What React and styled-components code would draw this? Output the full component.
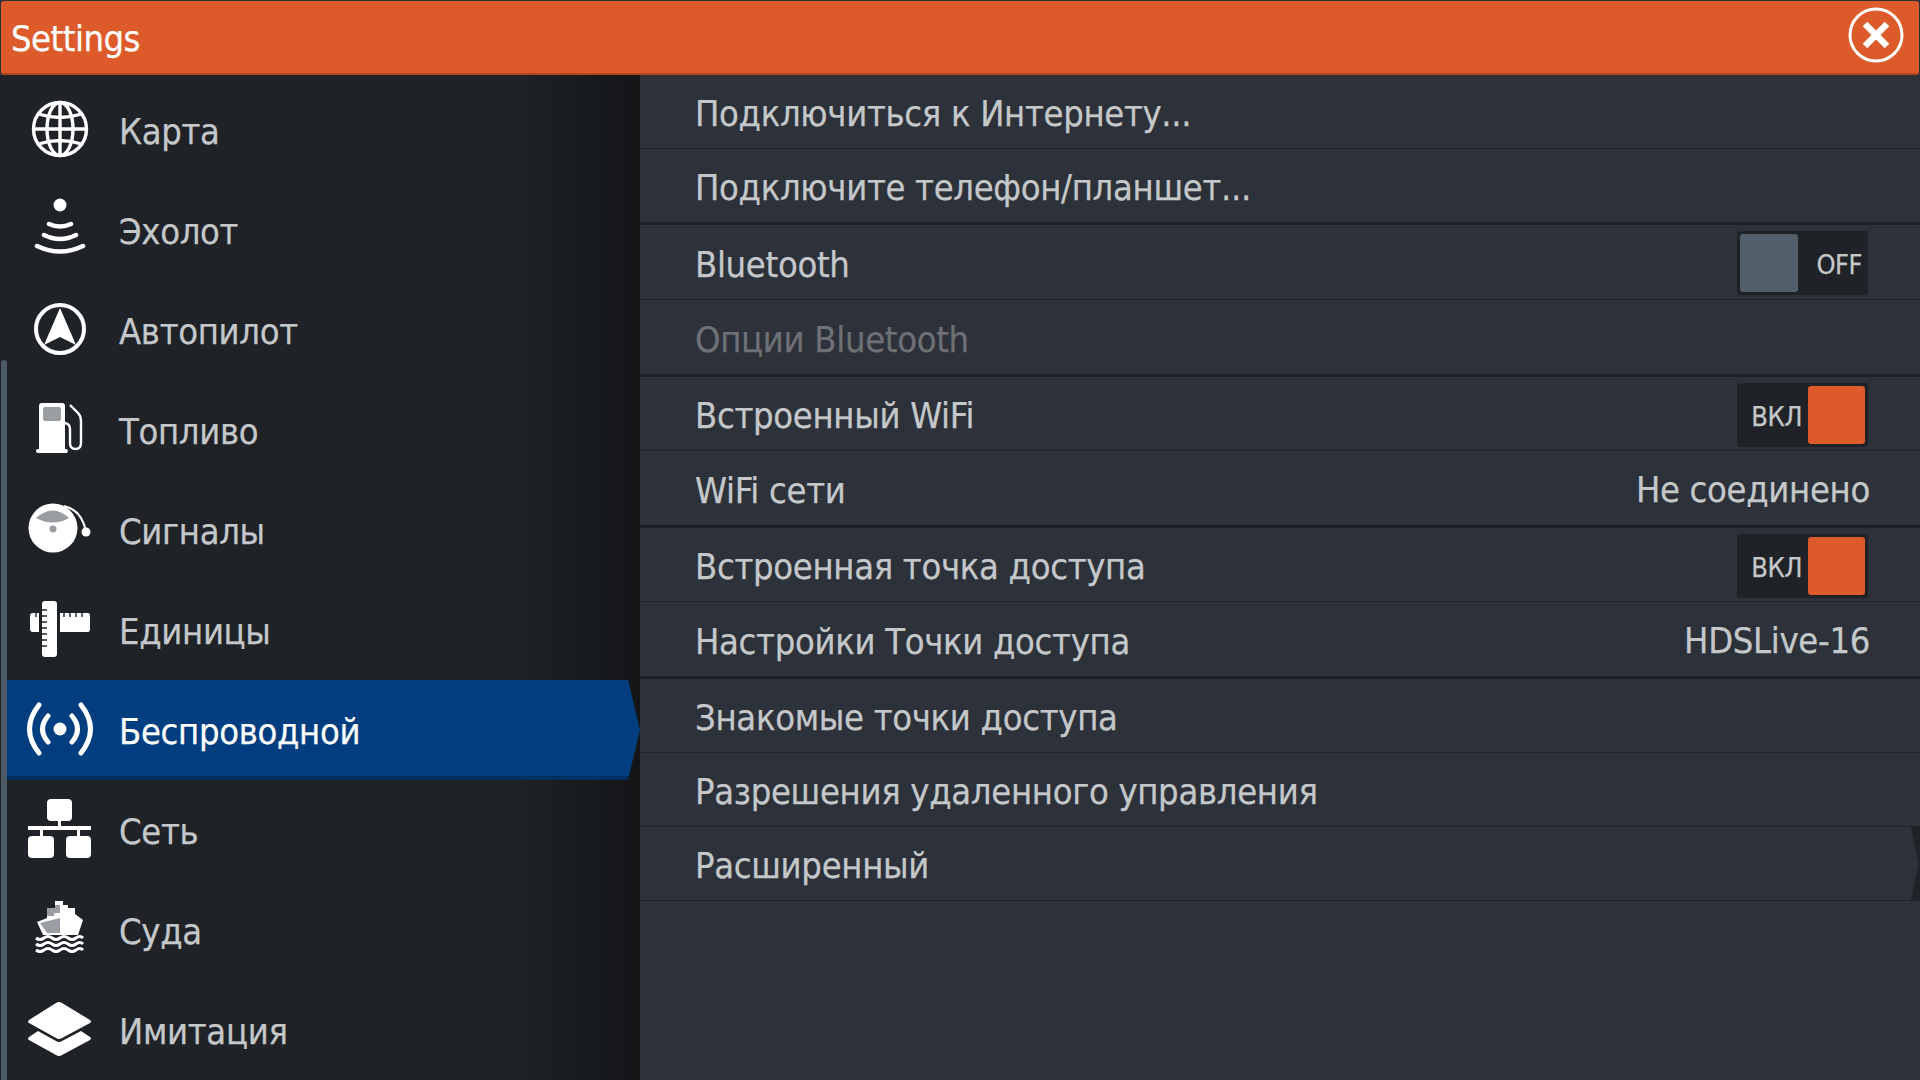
import React from 'react';
import styled, { createGlobalStyle } from 'styled-components';

const GlobalStyle = createGlobalStyle`
  html, body {
    margin: 0;
    padding: 0;
    background: #2d3139;
    font-family: "DejaVu Sans Condensed", "DejaVu Sans", sans-serif;
    letter-spacing: -0.3px;
    -webkit-text-stroke: 0.25px;
  }
`;

const GlobeIcon = () => (
  <svg viewBox="0 0 80 80" width="80" height="80" fill="none" stroke="#fff" strokeWidth="3.4">
    <circle cx="40" cy="39" r="26.5" />
    <ellipse cx="40" cy="39" rx="13" ry="26.5" />
    <path d="M40 12.5v53M13.5 39h53M18.5 24q21.5 7 43 0M18.5 54q21.5-7 43 0" />
  </svg>
);

const SonarIcon = () => (
  <svg viewBox="0 0 80 80" width="80" height="80" fill="none" stroke="#fff" strokeWidth="4.5" strokeLinecap="round">
    <circle cx="40" cy="15" r="6.5" fill="#fff" stroke="none" />
    <path d="M29 34q11 5 22 0M24 45q16 8 32 0M17 56q23 11 46 0" />
  </svg>
);

const AutopilotIcon = () => (
  <svg viewBox="0 0 80 80" width="80" height="80">
    <circle cx="40" cy="39" r="24" fill="none" stroke="#fff" strokeWidth="4" />
    <path d="M40 18L56 55L40 47L24 55Z" fill="#fff" />
  </svg>
);

const FuelIcon = () => (
  <svg viewBox="0 0 80 80" width="80" height="80">
    <path d="M19 16q0-3 3-3h20q3 0 3 3v43h1q2 0 2 2t-2 2H18q-2 0-2-2t2-2h1Z" fill="#fff" />
    <rect x="23" y="17" width="18" height="14" rx="2" fill="#9a9ea3" />
    <path d="M50 15l8 8q3 3 3 8v22q0 6-5.500 6t-5.500-6V39q0-5-5-6" fill="none" stroke="#fff" strokeWidth="2.4" />
  </svg>
);

const BellIcon = () => (
  <svg viewBox="0 0 80 80" width="80" height="80">
    <circle cx="33" cy="38" r="24.5" fill="#fff" />
    <path d="M16 28Q33 13 49 28Q33 37 16 28Z" fill="#9a9ea3" />
    <circle cx="33" cy="39" r="3.5" fill="#9a9ea3" />
    <path d="M44 16q18 4 22 26" fill="none" stroke="#fff" strokeWidth="2.2" />
    <circle cx="66" cy="42" r="4.5" fill="#fff" />
  </svg>
);

const RulerIcon = () => (
  <svg viewBox="0 0 80 80" width="80" height="80">
    <rect x="22" y="11" width="15" height="56" rx="3" fill="#fff" />
    <path d="M10 26q0-3 3-3h6v19h-6q-3 0-3-3ZM40 23h28q2 0 2 3v13q0 3-2 3H40Z" fill="#fff" />
    <path d="M22 20h5M22 26h5M22 32h5M22 38h5M22 44h5M22 50h5M22 56h5M44 23v4M50 23v4M56 23v4M62 23v4M16 23v4" stroke="#1f2227" strokeWidth="1.4" />
  </svg>
);

const WirelessIcon = () => (
  <svg viewBox="0 0 80 80" width="80" height="80" fill="none" stroke="#fff" strokeWidth="5" strokeLinecap="round">
    <circle cx="40" cy="39" r="6.5" fill="#fff" stroke="none" />
    <path d="M28 26q-11 13 0 26M52 26q11 13 0 26M19 15q-19 24 0 48M61 15q19 24 0 48" />
  </svg>
);

const NetworkIcon = () => (
  <svg viewBox="0 0 80 80" width="80" height="80" fill="#fff">
    <rect x="27" y="9" width="25" height="22" rx="4" />
    <rect x="8" y="36" width="63" height="4" />
    <rect x="38" y="30" width="3" height="7" />
    <rect x="20" y="39" width="3" height="8" />
    <rect x="57" y="39" width="3" height="8" />
    <rect x="8" y="46" width="26" height="22" rx="4" />
    <rect x="46" y="46" width="25" height="22" rx="4" />
  </svg>
);

const ShipIcon = () => (
  <svg viewBox="0 0 80 80" width="80" height="80">
    <path d="M27 28v-10h8v-7h8v4h5v3h7v6l8 6-5 15H23l-6-13 10-4Z" fill="#fff" />
    <path d="M20 33l20-5v15H27Z" fill="#9a9ea3" />
    <path d="M27 26v-8h8v-3h5v8h-6v3Z" fill="#9a9ea3" />
    <path d="M16 48q4 3 8 0t8 0 8 0 8 0 8 0 7 0M16 54q4 3 8 0t8 0 8 0 8 0 8 0 7 0M16 60q4 3 8 0t8 0 8 0 8 0 8 0 7 0" fill="none" stroke="#fff" strokeWidth="3" />
  </svg>
);

const LayersIcon = () => (
  <svg viewBox="0 0 80 80" width="80" height="80" fill="#fff">
    <path d="M36 13q3-2 6 0l28 17q2 2 0 3L42 48q-3 2-6 0L9 33q-2-1 0-3Z" />
    <path d="M18 41l18 10q3 2 6 0l19-10 9 6q2 1 0 3L42 65q-3 2-6 0L9 50q-2-1 0-3Z" />
  </svg>
);

const CloseIcon = () => (
  <svg viewBox="0 0 60 60" width="60" height="60">
    <circle cx="30" cy="30" r="26" fill="none" stroke="#fff" strokeWidth="3" />
    <path d="M19 19L41 41M41 19L19 41" stroke="#fff" strokeWidth="6.5" />
  </svg>
);

const navItems = [
  { label: 'Карта', icon: <GlobeIcon /> },
  { label: 'Эхолот', icon: <SonarIcon /> },
  { label: 'Автопилот', icon: <AutopilotIcon /> },
  { label: 'Топливо', icon: <FuelIcon /> },
  { label: 'Сигналы', icon: <BellIcon /> },
  { label: 'Единицы', icon: <RulerIcon /> },
  { label: 'Беспроводной', icon: <WirelessIcon />, active: true },
  { label: 'Сеть', icon: <NetworkIcon /> },
  { label: 'Суда', icon: <ShipIcon /> },
  { label: 'Имитация', icon: <LayersIcon /> },
];

const App = () => {
  return (
    <Screen>
      <GlobalStyle />
      <Header>
        <Title>Settings</Title>
        <CloseButton><CloseIcon /></CloseButton>
      </Header>
      <Body>
        <Sidebar>
          <ScrollThumb />
          {navItems.map((item) => (
            <NavItem key={item.label} $active={item.active}>
              <IconBox>{item.icon}</IconBox>
              <NavLabel $active={item.active}>{item.label}</NavLabel>
            </NavItem>
          ))}
        </Sidebar>
        <Panel>
          <Row $h={74}><RowLabel>Подключиться к Интернету...</RowLabel></Row>
          <Row $h={76} $end><RowLabel>Подключите телефон/планшет...</RowLabel></Row>
          <Row $h={75}>
            <RowLabel>Bluetooth</RowLabel>
            <Toggle>
              <Knob />
              <ToggleText>OFF</ToggleText>
            </Toggle>
          </Row>
          <Row $h={77} $end><RowLabel $disabled>Опции Bluetooth</RowLabel></Row>
          <Row $h={74}>
            <RowLabel>Встроенный WiFi</RowLabel>
            <Toggle>
              <ToggleText $on>ВКЛ</ToggleText>
              <Knob $on />
            </Toggle>
          </Row>
          <Row $h={77} $end>
            <RowLabel>WiFi сети</RowLabel>
            <RowValue>Не соединено</RowValue>
          </Row>
          <Row $h={74}>
            <RowLabel>Встроенная точка доступа</RowLabel>
            <Toggle>
              <ToggleText $on>ВКЛ</ToggleText>
              <Knob $on />
            </Toggle>
          </Row>
          <Row $h={77} $end>
            <RowLabel>Настройки Точки доступа</RowLabel>
            <RowValue>HDSLive-16</RowValue>
          </Row>
          <Row $h={74}><RowLabel>Знакомые точки доступа</RowLabel></Row>
          <Row $h={74}><RowLabel>Разрешения удаленного управления</RowLabel></Row>
          <Row $h={74} $more><RowLabel>Расширенный</RowLabel></Row>
        </Panel>
      </Body>
    </Screen>
  );
};

const Screen = styled.div`
  width: 1920px;
  height: 1080px;
  display: flex;
  flex-direction: column;
  overflow: hidden;
  background: #2d3139;
`;

const Header = styled.div`
  height: 72px;
  margin-top: 1px;
  margin-right: 1px;
  margin-left: 1px;
  padding: 0 13px 0 10px;
  display: flex;
  align-items: center;
  justify-content: space-between;
  flex-shrink: 0;
  background: #dd5a2b;
  border-bottom: 2px solid #b4461f;
  border-radius: 3px;
`;

const Title = styled.div`
  color: #fff;
  font-size: 36px;
  letter-spacing: -0.5px;
  padding-top: 3px;
`;

const CloseButton = styled.div`
  width: 60px;
  height: 60px;
  margin-top: -4px;
`;

const Body = styled.div`
  flex: 1;
  display: flex;
  min-height: 0;
`;

const Sidebar = styled.div`
  position: relative;
  width: 640px;
  flex-shrink: 0;
  padding-top: 5px;
  padding-left: 7px;
  box-sizing: border-box;
  background: linear-gradient(90deg, #1f2227 0%, #1f2227 80%, #131517 100%);
  overflow: hidden;
`;

const ScrollThumb = styled.div`
  position: absolute;
  left: 1px;
  top: 285px;
  bottom: 0;
  width: 6px;
  border-radius: 3px 3px 0 0;
  background: #4c5a66;
`;

const NavItem = styled.div`
  height: 100px;
  display: flex;
  align-items: center;
  gap: 19px;
  padding-left: 13px;
  box-sizing: border-box;
  background: ${(p) => (p.$active ? 'linear-gradient(180deg, #003e7f 0%, #003e7f 96%, #002f63 96%)' : 'transparent')};
  clip-path: ${(p) => (p.$active ? 'polygon(0 0, 621px 0, 633px 50%, 621px 100%, 0 100%)' : 'none')};
`;

const IconBox = styled.div`
  width: 80px;
  height: 80px;
  flex-shrink: 0;
`;

const NavLabel = styled.span`
  color: ${(p) => (p.$active ? '#fff' : '#c4c8ca')};
  font-size: 36px;
  margin-top: 2px;
`;

const Panel = styled.div`
  flex: 1;
  display: flex;
  flex-direction: column;
  background: #2d3139;
`;

const Row = styled.div`
  position: relative;
  height: ${(p) => p.$h}px;
  box-sizing: border-box;
  padding: 0 50px 0 55px;
  display: flex;
  align-items: center;
  justify-content: space-between;
  border-bottom: ${(p) => (p.$end ? '3px solid #1b1e22' : '1px solid #202328')};
  &::after {
    content: ${(p) => (p.$more ? '""' : 'none')};
    position: absolute;
    right: 0;
    top: 0;
    bottom: 0;
    width: 9px;
    background: #1f2227;
    clip-path: polygon(0 0, 100% 0, 100% 100%, 0 100%, 85% 50%);
  }
`;

const RowLabel = styled.span`
  color: ${(p) => (p.$disabled ? '#6d7075' : '#c4c8ca')};
  font-size: 36px;
  margin-top: 4px;
`;

const RowValue = styled.span`
  color: #c4c8ca;
  font-size: 36px;
  margin-top: 3px;
`;

const Toggle = styled.div`
  width: 131px;
  height: 64px;
  margin-right: 2px;
  margin-top: 2px;
  padding: 0 3px;
  box-sizing: border-box;
  display: flex;
  align-items: center;
  justify-content: space-between;
  border-radius: 3px;
  background: #1f2227;
`;

const Knob = styled.div`
  width: ${(p) => (p.$on ? '57px' : '58px')};
  height: 58px;
  border-radius: 3px;
  background: ${(p) => (p.$on ? '#dd5a2b' : '#525f6b')};
`;

const ToggleText = styled.span`
  flex: 1;
  text-align: right;
  padding-right: ${(p) => (p.$on ? '6px' : '3px')};
  margin-top: 3px;
  color: #c4c8ca;
  font-size: 27px;
  letter-spacing: -0.5px;
`;

export default App;
